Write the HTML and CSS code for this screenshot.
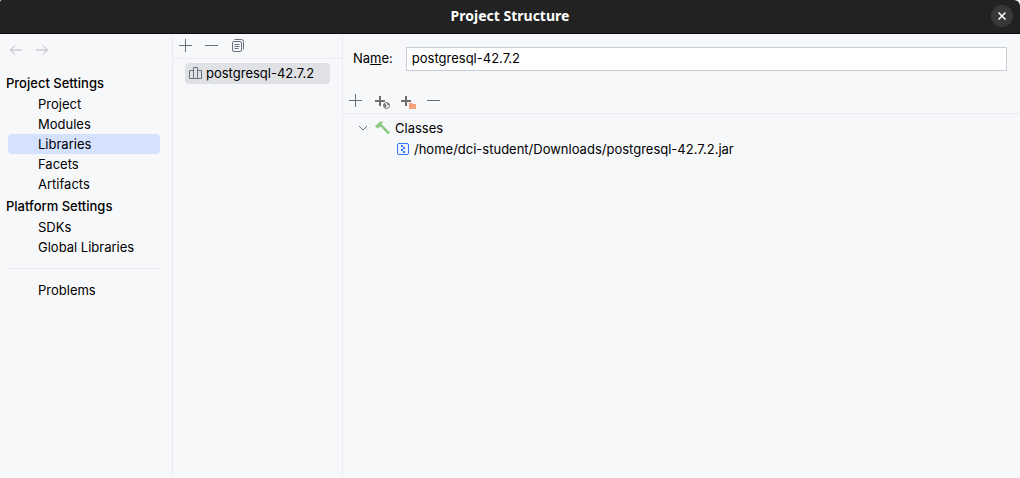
FILE: index.html
```html
<!DOCTYPE html>
<html lang="en">
<head>
<meta charset="utf-8">
<title>Project Structure</title>
<link rel="stylesheet" href="styles.css">
</head>
<body>
<div class="window">
  <header class="titlebar">
    <h1 class="title">Project Structure</h1>
    <button class="close" aria-label="Close"><svg width="10" height="10" viewBox="0 0 10 10"><path d="M1.5 1.5l7 7M8.5 1.5l-7 7" stroke="#fff" stroke-width="1.5"/></svg></button>
  </header>
  <main class="panes">
    <nav class="sidebar">
      <div class="history">
        <button class="icon" aria-label="Back"><svg width="14" height="14" viewBox="0 0 14 14"><path d="M13 7H1.500M6 2.500L1.500 7L6 11.500"/></svg></button>
        <button class="icon" aria-label="Forward"><svg width="14" height="14" viewBox="0 0 14 14"><path d="M1 7H12.500M8 2.500L12.500 7L8 11.500"/></svg></button>
      </div>
      <h2 class="group">Project Settings</h2>
      <a class="link" href="#project">Project</a>
      <a class="link" href="#modules">Modules</a>
      <a class="link selected" href="#libraries" aria-current="page">Libraries</a>
      <a class="link" href="#facets">Facets</a>
      <a class="link" href="#artifacts">Artifacts</a>
      <h2 class="group">Platform Settings</h2>
      <a class="link" href="#sdks">SDKs</a>
      <a class="link" href="#global">Global Libraries</a>
      <hr class="rule">
      <a class="link" href="#problems">Problems</a>
    </nav>
    <section class="libraries" aria-label="Libraries">
      <div class="toolbar">
        <button class="icon" aria-label="Add library"><svg width="14" height="14" viewBox="0 0 14 14"><path d="M6.500 0v13M0 6.500h13"/></svg></button>
        <button class="icon" aria-label="Remove library"><svg width="14" height="14" viewBox="0 0 14 14"><path d="M0 6.500h13"/></svg></button>
        <button class="icon" aria-label="Copy library"><svg width="14" height="14" viewBox="0 0 14 14"><rect x="1.500" y="2.500" width="9" height="10" rx="1.500"/><path d="M3.500 .5h7a2 2 0 0 1 2 2v8M3.500 5.500h5M3.500 7.500h5M3.500 9.500h4"/></svg></button>
      </div>
      <a class="library" href="#postgresql"><svg width="14" height="14" viewBox="0 0 14 14"><path d="M.5 4.500h4v8h-4zM4.500 1.500h4v11h-4zM8.500 4.500h4v8h-4z"/></svg>postgresql-42.7.2</a>
    </section>
    <section class="details" aria-label="Library details">
      <div class="field">
        <label for="name">Na<u>m</u>e:</label>
        <input id="name" type="text" value="postgresql-42.7.2">
      </div>
      <div class="toolbar">
        <button class="icon" aria-label="Add"><svg width="14" height="14" viewBox="0 0 14 14"><path d="M6.500 0v13M0 6.500h13"/></svg></button>
        <button class="icon" aria-label="Specify documentation URL"><svg width="16" height="16" viewBox="0 0 16 16"><path d="M6 3v10M1 8h10" stroke="#6e6e6e" stroke-width="2"/><circle cx="12.500" cy="12.500" r="4.200" fill="#f7f8fa" stroke="none"/><circle cx="12.500" cy="12.500" r="3" stroke="#6e6e6e"/><path d="M10 11l2 .5.5 1.500-1 2-1.500-2zM12.500 10l2 .5.5 2-1.500-.5z" fill="#6e6e6e" stroke="none"/></svg></button>
        <button class="icon" aria-label="Exclude"><svg width="16" height="16" viewBox="0 0 16 16"><path d="M6 3v10M1 8h10" stroke="#6e6e6e" stroke-width="2"/><path d="M8 9h8v7H8z" fill="#f7f8fa" stroke="none"/><path d="M9 10h3l1 1h3v5H9z" fill="#f4a07a" stroke="none"/></svg></button>
        <button class="icon" aria-label="Remove"><svg width="14" height="14" viewBox="0 0 14 14"><path d="M0 6.500h13"/></svg></button>
      </div>
      <ul class="tree">
        <li>
          <div class="node"><button class="icon chevron" aria-label="Collapse"><svg width="10" height="10" viewBox="0 0 10 10"><path d="M1 3l4 4 4-4"/></svg></button><svg class="hammer" width="16" height="16" viewBox="0 0 16 16"><path d="M0 6L5 1.500H8.500L6.500 4 15 12.500 13 14.500 5.500 6.500 2.500 8.500z" fill="#8fca85" stroke="none"/></svg>Classes</div>
          <ul class="children">
            <li class="node"><svg class="jar" width="14" height="14" viewBox="0 0 14 14"><rect x="1.500" y="1.500" width="11" height="11" rx="1.500" fill="#edf3ff"/><path d="M5 3h2v2H5zM7 5h2v2H7zM5 7h2v2H5zM7 9h2v2H7z" fill="#3574f0" stroke="none"/></svg>/home/dci-student/Downloads/postgresql-42.7.2.jar</li>
          </ul>
        </li>
      </ul>
    </section>
  </main>
</div>
</body>
</html>
```
FILE: styles.css
```css
* { box-sizing: border-box; }

body {
  margin: 0;
  background: #fff;
  color: #000;
  font: 13px/20px Inter, "Liberation Sans", sans-serif;
}

button {
  padding: 0;
  border: 0;
  background: none;
}

a { color: inherit; text-decoration: none; }
ul { margin: 0; padding: 0; list-style: none; }
svg { display: block; flex: none; overflow: visible; fill: none; stroke: #6c707e; }

.window {
  display: flex;
  flex-direction: column;
  min-height: 100vh;
}

.titlebar {
  display: grid;
  grid-template-columns: 1fr auto 1fr;
  align-items: center;
  height: 34px;
  padding: 0 7px 2px;
  border-bottom: 1px solid #120b14;
  border-radius: 2px 6px 0 0;
  background: #222;
}

.title {
  grid-column: 2;
  margin: 0;
  color: #fff;
  font: bold 14px/20px "Noto Sans", "Open Sans", sans-serif;
}

.close {
  display: grid;
  place-items: center;
  justify-self: end;
  width: 22px;
  height: 22px;
  border-radius: 50%;
  background: #383838;
}

.panes {
  display: grid;
  grid-template-columns: 173px 170px 1fr;
  flex: 1;
  background: #f7f8fa;
}

.sidebar, .libraries { border-right: 1px solid #ebecf0; }

.icon {
  display: grid;
  place-items: center;
  width: 16px;
  height: 16px;
}

.history {
  display: flex;
  gap: 10px;
  padding: 8px 8px 13px;
}

.history svg { stroke: #b8b9bd; }

.group {
  margin: 0;
  padding: 2px 6px 1px;
  font-size: 13px;
  font-weight: 500;
  line-height: 20px;
}

.link {
  display: block;
  margin: 0 12px 0 8px;
  padding-left: 30px;
  border-radius: 4px;
}

.selected { background: #d4e2ff; }

.rule {
  height: 1px;
  margin: 11px 12px 11px 8px;
  border: 0;
  background: #ebecf0;
}

.toolbar {
  display: flex;
  gap: 10px;
  padding: 4px 5px;
  border-bottom: 1px solid #ebecf0;
}

.library {
  display: flex;
  gap: 3px;
  height: 21px;
  margin: 4px 12px 0;
  padding-left: 4px;
  border-radius: 4px;
  background: #dfe1e5;
}

.library svg { margin-top: 3px; }

.field {
  display: flex;
  align-items: center;
  gap: 13px;
  padding: 13px 13px 18px 10px;
}

.field label { padding-bottom: 2px; }

.field input {
  flex: 1;
  min-width: 0;
  height: 24px;
  padding: 0 5px 2px;
  border: 1px solid #c9ccd6;
  background: #fff;
  color: inherit;
  font: inherit;
}

.tree { padding: 3px 15px; }

.node {
  display: flex;
  align-items: center;
  height: 21px;
}

.chevron { width: 10px; }
.hammer { margin: 0 4px 0 7px; }
.children { padding-left: 38px; }
.jar { margin-right: 4px; stroke: #3574f0; }
```
